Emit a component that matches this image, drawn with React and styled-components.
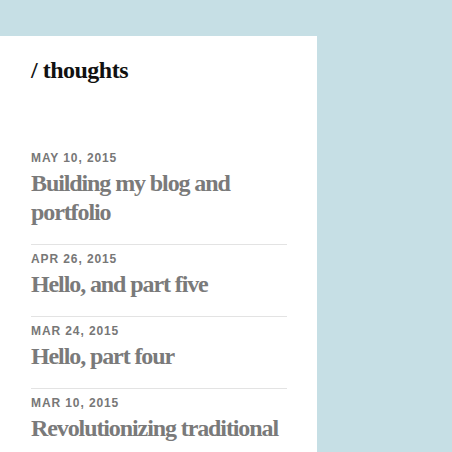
import styled, { createGlobalStyle } from 'styled-components';

const GlobalStyle = createGlobalStyle`
    html, body {
        margin: 0;
        padding: 0;
        background: #c6dfe5;
    }
`;

const Page = styled.div`
    width: 452px;
    height: 452px;
    overflow: hidden;
    padding-top: 36px;
    box-sizing: border-box;
`;

const Panel = styled.div`
    width: 317px;
    min-height: 416px;
    background: #ffffff;
    padding: 20px 30px 0 31px;
    box-sizing: border-box;
`;

const Heading = styled.h1`
    margin: 0 0 59px;
    font-family: 'Liberation Serif', serif;
    font-weight: bold;
    font-size: 24px;
    line-height: 29px;
    letter-spacing: -0.5px;
    color: #111111;
`;

const Post = styled.div`
    padding: 5px 0 17px;
    border-bottom: 1px solid #e3e3e3;
`;

const PostDate = styled.div`
    font-family: 'Liberation Sans', sans-serif;
    font-weight: bold;
    font-size: 12px;
    line-height: 18px;
    letter-spacing: 0.9px;
    color: #777777;
    margin-bottom: 2px;
`;

const PostTitle = styled.div`
    font-family: 'Liberation Serif', serif;
    font-weight: bold;
    font-size: 24px;
    line-height: 29px;
    letter-spacing: -1.1px;
    color: #7a7a7a;
`;

const posts = [
    { date: 'May 10, 2015', title: 'Building my blog and portfolio' },
    { date: 'Apr 26, 2015', title: 'Hello, and part five' },
    { date: 'Mar 24, 2015', title: 'Hello, part four' },
    { date: 'Mar 10, 2015', title: 'Revolutionizing traditional' },
];

export default function App() {
    return (
        <Page>
            <GlobalStyle />
            <Panel>
                <Heading>/ thoughts</Heading>
                {posts.map((post) => (
                    <Post key={post.date}>
                        <PostDate>{post.date.toUpperCase()}</PostDate>
                        <PostTitle>{post.title}</PostTitle>
                    </Post>
                ))}
            </Panel>
        </Page>
    );
}
